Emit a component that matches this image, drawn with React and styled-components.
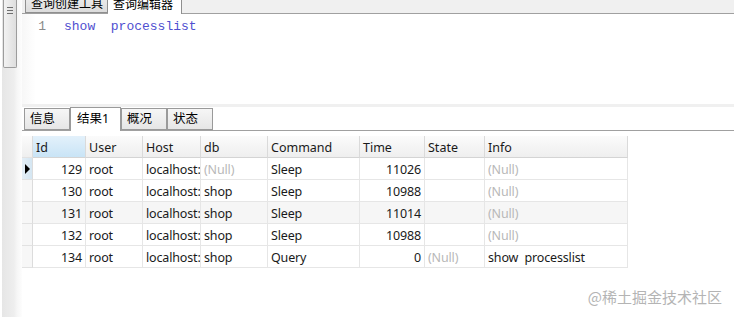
import React from 'react'
import styled, { createGlobalStyle } from 'styled-components'

const GlobalStyle = createGlobalStyle`
  html, body {
    margin: 0;
    padding: 0;
    background: #ffffff;
    overflow: hidden;
  }
  body {
    font-family: "Noto Sans", "Noto Sans CJK SC", sans-serif;
    font-size: 12px;
    color: #1a1a1a;
  }
`

const columns = '11px 53px 57px 58px 67px 92px 65px 60px 143px'

const rows = [
  { id: 129, user: 'root', host: 'localhost:', db: null, command: 'Sleep', time: 11026, state: '', info: null, current: true },
  { id: 130, user: 'root', host: 'localhost:', db: 'shop', command: 'Sleep', time: 10988, state: '', info: null },
  { id: 131, user: 'root', host: 'localhost:', db: 'shop', command: 'Sleep', time: 11014, state: '', info: null, shaded: true },
  { id: 132, user: 'root', host: 'localhost:', db: 'shop', command: 'Sleep', time: 10988, state: '', info: null },
  { id: 134, user: 'root', host: 'localhost:', db: 'shop', command: 'Query', time: 0, state: null, info: 'show  processlist' },
]

function Value({ v }) {
  if (v === null) return <Null>(Null)</Null>
  return v
}

export default function App() {
  return (
    <>
      <GlobalStyle />
      <Window>
        <LeftStrip>
          <Thumb>
            <Grip />
            <Grip />
            <Grip />
          </Thumb>
        </LeftStrip>
        <Main>
          <TopTabs>
            <TopTab>查询创建工具</TopTab>
            <TopTab active>查询编辑器</TopTab>
          </TopTabs>
          <Editor>
            <LineNo>1</LineNo>
            <Code>show  processlist</Code>
          </Editor>
          <Band />
          <ResultTabs>
            <ResultTab>信息</ResultTab>
            <ResultTab active>结果1</ResultTab>
            <ResultTab>概况</ResultTab>
            <ResultTab>状态</ResultTab>
          </ResultTabs>
          <Grid>
            <Row header>
              <Indicator header />
              <HeadCell sorted>Id</HeadCell>
              <HeadCell>User</HeadCell>
              <HeadCell>Host</HeadCell>
              <HeadCell>db</HeadCell>
              <HeadCell>Command</HeadCell>
              <HeadCell>Time</HeadCell>
              <HeadCell>State</HeadCell>
              <HeadCell>Info</HeadCell>
            </Row>
            {rows.map((r) => (
              <Row key={r.id} shaded={r.shaded}>
                <Indicator current={r.current}>{r.current && <Arrow />}</Indicator>
                <Cell num>{r.id}</Cell>
                <Cell>{r.user}</Cell>
                <Cell>{r.host}</Cell>
                <Cell><Value v={r.db} /></Cell>
                <Cell>{r.command}</Cell>
                <Cell num>{r.time}</Cell>
                <Cell><Value v={r.state} /></Cell>
                <Cell><Value v={r.info} /></Cell>
              </Row>
            ))}
          </Grid>
        </Main>
        <Watermark>@稀土掘金技术社区</Watermark>
      </Window>
    </>
  )
}

const Window = styled.div`
  position: relative;
  display: flex;
  width: 734px;
  height: 317px;
  overflow: hidden;
  background: #ffffff;
`

const LeftStrip = styled.div`
  width: 22px;
  flex-shrink: 0;
  background: linear-gradient(to right, #ffffff 0, #ffffff 2px, #e6e6e6 2px, #eeeeee 14px, #f6f6f6 17px, #fdfdfd 22px);
  padding-left: 3px;
  box-sizing: border-box;
`

const Thumb = styled.div`
  width: 14px;
  height: 68px;
  box-sizing: border-box;
  border: 1px solid #9c9c9c;
  border-top: none;
  border-radius: 0 0 2px 2px;
  background: linear-gradient(to right, #f2f2f2, #dedede);
  display: flex;
  flex-direction: column;
  align-items: center;
  gap: 2px;
  padding-top: 7px;
`

const Grip = styled.div`
  width: 6px;
  height: 1px;
  background: #6e6e6e;
`

const Main = styled.div`
  flex: 1;
  display: flex;
  flex-direction: column;
`

const TopTabs = styled.div`
  height: 13px;
  border-bottom: 1px solid #a0a0a0;
  background: #f0f0f0;
  display: flex;
  align-items: flex-end;
  padding-left: 3px;
`

const TopTab = styled.div`
  height: 20px;
  line-height: 20px;
  margin-bottom: ${(p) => (p.active ? '-1px' : '0')};
  padding: 0 ${(p) => (p.active ? '8px' : '4px')} 0 5px;
  box-sizing: border-box;
  border: 1px solid #8f8f8f;
  border-bottom: ${(p) => (p.active ? 'none' : '1px solid #8f8f8f')};
  border-left: ${(p) => (p.active ? 'none' : '1px solid #8f8f8f')};
  background: ${(p) => (p.active ? '#ffffff' : 'linear-gradient(#f0f0f0, #dcdcdc)')};
  font-size: 12px;
  color: #000;
  white-space: nowrap;
  overflow: hidden;
`

const Editor = styled.div`
  height: 90px;
  display: flex;
  align-items: flex-start;
  padding-top: 5px;
  box-sizing: border-box;
  font-family: "Liberation Mono", "DejaVu Sans Mono", monospace;
  font-size: 13px;
  line-height: 16px;
  background: linear-gradient(to right, #f7f7f7 0, #ffffff 14px);
`

const LineNo = styled.span`
  width: 24px;
  text-align: right;
  color: #8a8a8a;
  margin-right: 18px;
`

const Code = styled.span`
  color: #4f4fd0;
  white-space: pre;
`

const Band = styled.div`
  height: 3px;
  background: #f0f0f0;
`

const ResultTabs = styled.div`
  height: 24px;
  box-sizing: border-box;
  border-bottom: 1px solid #a0a0a0;
  display: flex;
  align-items: flex-end;
  padding-left: 2px;
`

const ResultTab = styled.div`
  height: ${(p) => (p.active ? '24px' : '22px')};
  width: ${(p) => (p.active ? '51px' : '46px')};
  margin-bottom: ${(p) => (p.active ? '-1px' : '0')};
  box-sizing: border-box;
  border: 1px solid #9a9a9a;
  border-bottom: ${(p) => (p.active ? 'none' : '1px solid #9a9a9a')};
  background: ${(p) => (p.active ? '#ffffff' : 'linear-gradient(#f6f6f6, #e6e6e6)')};
  padding: ${(p) => (p.active ? '1px 0 0 6px' : '0 0 0 5px')};
  line-height: 19px;
  font-size: 12.5px;
  color: #000;
  & + & {
    border-left: ${(p) => (p.active ? '1px solid #9a9a9a' : 'none')};
  }
`

const Grid = styled.div`
  margin-top: 5px;
  display: flex;
  flex-direction: column;
  align-self: flex-start;
`

const Row = styled.div`
  display: grid;
  grid-template-columns: ${columns};
  height: 22px;
  background: ${(p) => (p.header ? 'linear-gradient(#fbfbfb, #eeeeee)' : p.shaded ? '#f6f6f6' : '#ffffff')};
`

const Indicator = styled.div`
  box-sizing: border-box;
  border-right: 1px solid #dcdcdc;
  border-bottom: 1px solid #e2e2e2;
  background: ${(p) => (p.current ? 'linear-gradient(to right, #e4eef6, #d4e6f2)' : p.header ? 'transparent' : '#f7f7f7')};
  display: flex;
  align-items: center;
  padding-left: 3px;
`

const Arrow = styled.div`
  width: 0;
  height: 0;
  border-top: 5px solid transparent;
  border-bottom: 5px solid transparent;
  border-left: 5px solid #000;
`

const HeadCell = styled.div`
  box-sizing: border-box;
  border-right: 1px solid #dadada;
  border-bottom: 1px solid #d4d4d4;
  padding: 2px 0 0 3px;
  line-height: 19px;
  font-size: 12.5px;
  white-space: nowrap;
  overflow: hidden;
  background: ${(p) => (p.sorted ? 'linear-gradient(#e3f1fb, #c9e4f6)' : 'transparent')};
`

const Cell = styled.div`
  box-sizing: border-box;
  border-right: 1px solid #e6e6e6;
  border-bottom: 1px solid #e6e6e6;
  padding: 2px ${(p) => (p.num ? '3px' : '0')} 0 3px;
  line-height: 19px;
  font-size: 12.5px;
  letter-spacing: -0.15px;
  white-space: pre;
  overflow: hidden;
  text-align: ${(p) => (p.num ? 'right' : 'left')};
`

const Null = styled.span`
  color: #b8b8b8;
`

const Watermark = styled.div`
  position: absolute;
  right: 12px;
  bottom: 10px;
  font-family: "Noto Sans CJK SC", sans-serif;
  font-size: 15px;
  color: #b4b4b4;
`
